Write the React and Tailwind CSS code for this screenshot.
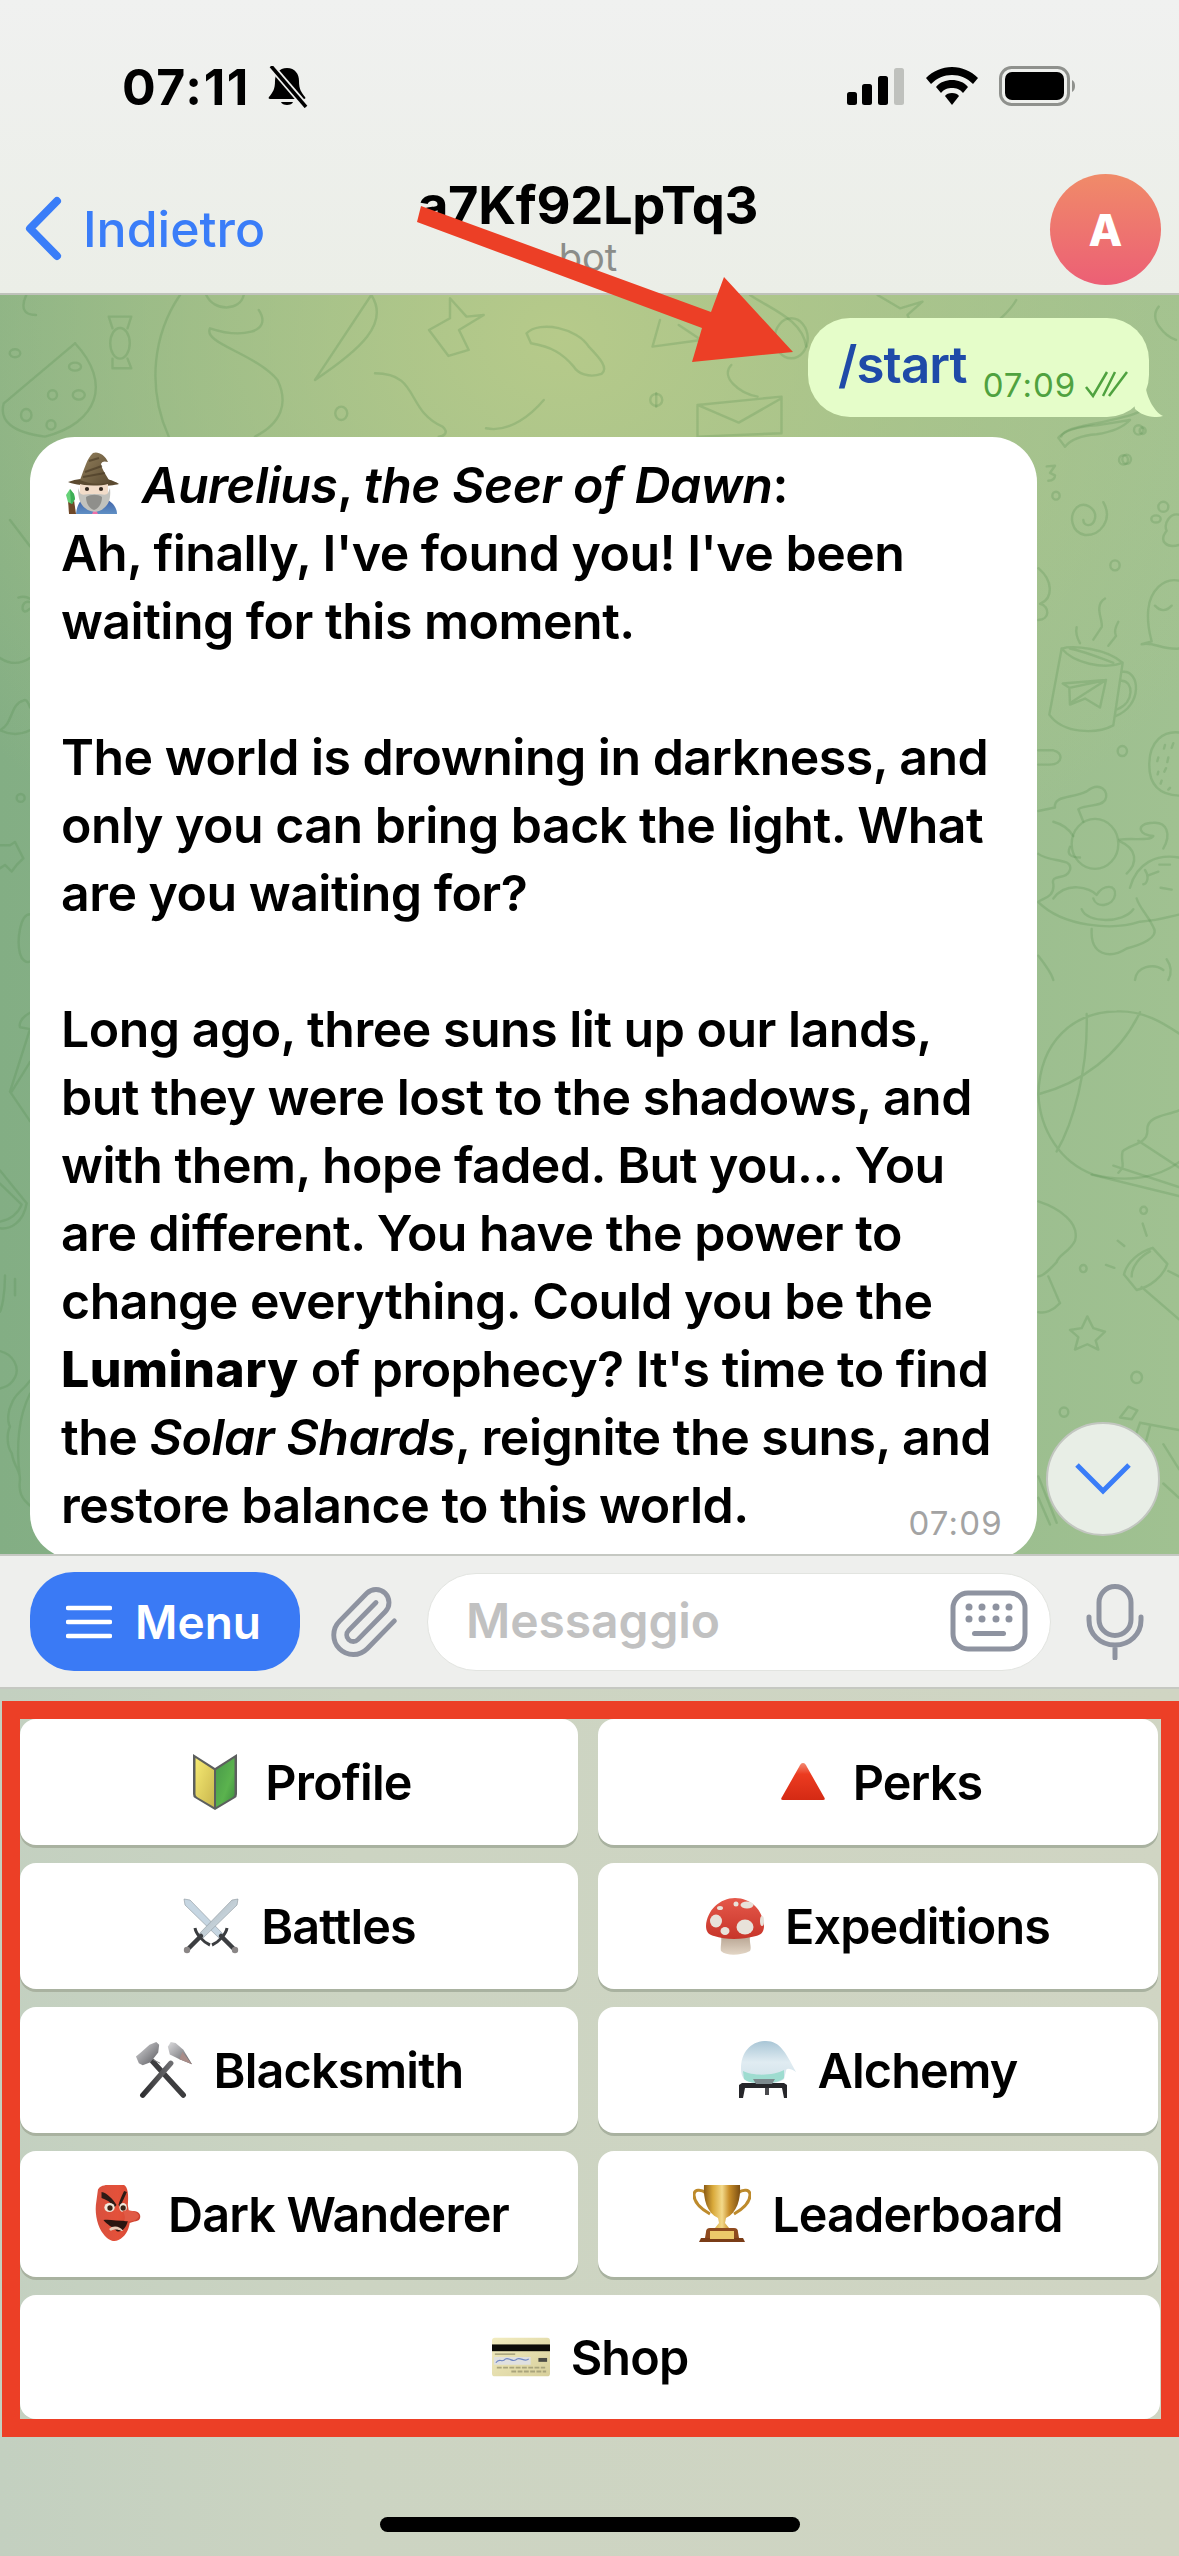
import React from "react";

const D = ({ t, children }) => (
  <g transform={t} fill="none" stroke="#4f8a4a" strokeOpacity="0.24" strokeWidth="2.4" strokeLinecap="round" strokeLinejoin="round">
    {children}
  </g>
);
const P = ({ d }) => <path d={d} vectorEffect="non-scaling-stroke" />;
const C = ({ x, y, r, ry }) => <ellipse cx={x} cy={y} rx={r} ry={ry || r} vectorEffect="non-scaling-stroke" />;

function Doodles() {
  return (
    <svg className="absolute inset-0 w-full h-full" viewBox="0 295 1179 1259" preserveAspectRatio="none">
      {/* top strip */}
      <D t="scale(0.75 0.3333)">
        <P d="M35 885C28 920 30 945 48 945" />
        <C x={160} y={1030} r={13} ry={46} />
        <P d="M150 985L145 950L175 950L170 985M150 1076L150 1105L175 1105L170 1076" />
        <P d="M100 1030L5 1210M100 1030C150 1150 130 1270 60 1310M5 1210Q-5 1290 60 1310" />
        <C x={100} y={1100} r={8} ry={12} /><C x={70} y={1185} r={6} ry={14} /><C x={105} y={1185} r={8} ry={14} /><C x={35} y={1245} r={7} ry={18} /><C x={68} y={1275} r={6} ry={14} />
        <C x={20} y={1060} r={7} ry={12} />
        <P d="M240 885C205 1000 195 1160 225 1310M345 930C365 1000 320 1015 280 985C270 1030 340 1060 370 1140C385 1210 375 1270 340 1310" />
        <P d="M275 885C285 935 320 935 325 885" />
        <P d="M495 885L420 1140C480 1050 520 970 495 885" />
        <P d="M600 895L622 950L645 945L612 990L625 1050L598 1068L572 990L600 955Z" />
        <P d="M702 1000C720 960 770 985 785 1040C800 1075 812 1105 802 1122C785 1135 770 1120 765 1100C750 1060 735 1040 708 1030Z" />
        <P d="M880 960L870 1040L935 1020L905 975M1000 885C1030 930 1070 960 1075 1040" />
        <C x={1055} y={1015} r={22} ry={60} />
        <P d="M500 1120C560 1120 540 1230 590 1280C600 1300 590 1310 585 1310M875 1180L875 1220" />
        <C x={455} y={1240} r={8} ry={20} />
        <C x={875} y={1200} r={8} ry={18} />
        <P d="M930 1215L1042 1190L1042 1300L930 1310ZM930 1215L985 1268L1042 1195" />
        <P d="M975 1095C960 1130 985 1180 1010 1190M648 1285C680 1300 710 1240 725 1200" />
        <P d="M1170 885L1200 925L1230 905L1210 945L1220 1000M1355 900C1340 960 1300 1010 1290 1040" />
        <P d="M1415 1310C1420 1280 1450 1280 1500 1250C1540 1230 1530 1190 1500 1210" />
        <C x={1518} y={1290} r={6} ry={14} />
        <C x={1498} y={1380} r={6} ry={14} />
        <P d="M1545 920C1530 960 1555 1010 1568 1020" />
      </D>
      {/* right column */}
      <D t="translate(1030 420) scale(0.3333 0.3571)">
        <P d="M85 50Q110 20 200 15L300 0M85 50L105 75Q130 45 200 40Q270 30 300 0" />
        <C x={338} y={30} r={9} /><C x={290} y={110} r={13} /><C x={78} y={212} r={11} /><C x={255} y={407} r={14} /><C x={277} y={927} r={14} />
        <P d="M50 130L75 128L60 148L75 155Q75 170 55 170" />
        <P d="M220 230C250 280 210 325 165 322C125 315 115 270 140 245C165 225 200 250 195 275C190 300 160 300 160 280" />
        <C x={400} y={243} r={15} ry={14} /><C x={378} y={277} r={14} ry={10} />
        <P d="M447 265C420 260 400 290 410 310C385 340 410 360 447 350" />
        <P d="M25 415C70 450 70 500 30 515C60 520 60 560 25 560" />
        <P d="M225 500C190 520 220 560 215 580L190 615M140 580Q135 600 150 625M265 565Q250 590 258 605L235 632" />
        <P d="M95 640L58 825C100 880 200 880 250 855L278 680C230 640 130 630 95 640ZM95 640C130 680 220 700 278 680M120 640C170 650 220 670 250 680M278 705C330 700 340 800 255 830M275 730C310 730 315 790 262 810" />
        <P d="M98 738L228 728L210 805L165 780L120 797L118 750ZM118 750L228 728L125 790" />
        <P d="M447 450C400 440 360 480 355 530C350 570 360 600 365 620L335 628C370 620 400 645 447 640M375 520Q400 545 425 520" />
        <P d="M447 875C400 870 360 900 358 960C355 1030 400 1050 447 1052M405 910L402 920M430 905L425 918M385 945L382 955M415 945L412 958M408 975L403 985M385 985L383 992M395 1010L392 1018M420 1030L415 1035" />
        <P d="M25 925L70 925C100 930 100 965 60 965L25 965" />
        <P d="M25 1095L75 1085C70 1050 130 1060 170 1040C210 1010 240 1040 225 1065C210 1085 170 1075 145 1090L160 1125" />
        <C x={195} y={1187} r={70} />
        <P d="M70 1125Q110 1135 130 1165M120 1195Q105 1225 150 1225M268 1175C310 1170 360 1180 370 1165C330 1165 310 1130 370 1128C410 1125 425 1160 400 1200" />
        <P d="M25 1215C60 1240 130 1225 120 1260C110 1290 60 1270 70 1300C75 1340 30 1340 25 1350M25 1350C100 1420 250 1430 330 1405C390 1400 420 1390 447 1385" />
        <P d="M300 1310C320 1240 380 1215 447 1225M388 1245L420 1245M392 1310L425 1315M345 1260C360 1280 350 1300 340 1300M355 1275L385 1265" />
        <P d="M270 1180C320 1200 325 1240 290 1270M70 1340C110 1290 180 1310 200 1330C220 1300 260 1300 255 1330C250 1360 200 1370 190 1340M155 1370C170 1410 280 1410 310 1370M185 1425C180 1500 240 1510 290 1480C330 1470 390 1450 370 1420C350 1380 330 1370 320 1340" />
        <P d="M25 1500C50 1530 65 1550 70 1568M315 1568C320 1530 370 1520 400 1540M410 1510C425 1530 425 1550 415 1568" />
      </D>
      <D t="translate(1030 980) scale(0.3333 0.3571)">
        <P d="M25 320C30 170 130 90 260 88C340 85 400 120 447 150M25 320C150 290 270 210 330 90M170 95C175 250 130 400 80 480M25 320C30 420 90 510 190 545C300 570 390 550 447 510" />
        <P d="M447 365C410 380 350 380 352 420C355 460 300 460 278 480C270 510 290 520 265 540M325 450L447 525M250 520L447 580M185 545L447 605" />
        <P d="M25 620C90 640 150 680 135 730C120 760 85 770 80 790C60 810 40 830 25 830M55 830L90 905C70 925 45 935 25 930" />
        <C x={341} y={645} r={10} /><C x={160} y={808} r={10} /><C x={320} y={1113} r={16} /><C x={102} y={1210} r={13} />
        <P d="M338 682L350 716M263 730L283 745M228 798L253 806" />
        <P d="M282 825C290 790 330 760 368 750L412 795C400 830 360 860 320 868ZM305 830C305 800 330 775 360 760M335 860L447 950M415 815L447 830" />
        <P d="M172 942L190 975L225 985L197 1010L205 1035L172 1020L135 1035L145 1000L120 980L155 975Z" />
        <P d="M270 1225L295 1195L322 1205L305 1230ZM330 1240L447 1260M330 1240L300 1320M360 1250L340 1320M400 1300L447 1370M400 1410L447 1450M25 1390L80 1520M25 1450L60 1525" />
      </D>
      {/* left column */}
      <D t="translate(0 520) scale(0.3333 0.657)">
        <P d="M30 0L90 40M55 118C75 115 90 120 90 120M90 135C60 150 60 120 90 125M0 210C30 220 60 220 90 210M0 320C40 310 30 280 70 275C80 270 90 285 90 285M0 320C40 330 70 325 90 320" />
        <C x={62} y={423} r={12} ry={6} />
        <P d="M0 495L30 495L45 490L70 515L50 525L35 535L15 525L0 530" />
        <P d="M90 600C60 600 50 640 60 660C65 670 80 675 90 672M90 750C70 755 55 765 60 772L90 775L30 870L90 915M35 870L90 825" />
        <P d="M0 990L80 1040C70 1070 30 1080 0 1078M0 1010L65 1042C50 1060 20 1066 0 1068M15 1150C15 1180 5 1200 0 1205M45 1155L45 1180" />
        <P d="M0 1265C40 1270 60 1290 45 1305C30 1320 10 1320 0 1322" />
        <P d="M90 1310C60 1330 45 1330 35 1345C25 1355 20 1370 30 1380C20 1390 20 1410 35 1420C40 1440 60 1445 60 1460C55 1480 65 1490 90 1500M90 1330C60 1360 45 1400 60 1460" />
      </D>
    </svg>
  );
}

/* ---------- emoji drawings ---------- */
const Wizard = ({ className }) => (
  <svg className={className} viewBox="0 0 54 63" width="54" height="63">
    <defs>
      <linearGradient id="wzh" x1="0" y1="0" x2="1" y2="1"><stop offset="0" stopColor="#93805c" /><stop offset="1" stopColor="#5c4c33" /></linearGradient>
      <linearGradient id="wzc" x1="0" y1="0" x2="0" y2="1"><stop offset="0" stopColor="#3f5fa6" /><stop offset="1" stopColor="#5f8fc4" /></linearGradient>
    </defs>
    <path d="M11 62C12 52 16 47 20 46L40 46C47 50 52 55 52 62Z" fill="url(#wzc)" />
    <path d="M30 56L33 62H27Z" fill="#ee6fa8" />
    <path d="M3 30C12 27 18 26 30 26C40 26 48 28 54 32C44 35 14 35 3 30Z" fill="#5b4a30" />
    <path d="M15 28C19 18 22 6 28 1C33-1 40 3 43 10C40 9 37 9 36 12C37 18 42 24 45 30C35 33 24 32 15 28Z" fill="url(#wzh)" />
    <path d="M20 20L37 14M18 25L40 21M24 9L34 6" stroke="#41331f" strokeWidth="2" fill="none" opacity=".55" />
    <path d="M15 32C22 34 36 34 43 32L43 43C40 47 18 47 15 43Z" fill="#f2dcc9" />
    <path d="M13 36C13 46 15 52 20 56C26 61 34 61 39 56C44 52 46 46 45 36L43 41C41 44 38 42 29 42C20 42 17 44 15 41Z" fill="#c2c2bd" />
    <path d="M21 45C26 42 33 42 37 45C37 52 33 57 29 58C25 57 21 52 21 45Z" fill="#8f8f8b" />
    <circle cx="22" cy="37" r="2.100" fill="#33281f" /><circle cx="36" cy="37" r="2.100" fill="#33281f" />
    <path d="M3 48L9 48L11 62H4Z" fill="#6f4828" />
    <path d="M5 37L1 43L3 50L7 52L10 47L9 42Z" fill="#66d278" />
    <path d="M5 37L6 52L7 52L10 47L9 42Z" fill="#3daf56" />
  </svg>
);

const Shield = () => (
  <svg viewBox="0 0 46 58" width="46" height="58">
    <defs>
      <linearGradient id="shy" x1="0" y1="0" x2="1" y2="1"><stop offset="0" stopColor="#f6ea72" /><stop offset="1" stopColor="#c9b64e" /></linearGradient>
      <linearGradient id="shg" x1="0" y1="0" x2="1" y2="1"><stop offset="0" stopColor="#48984a" /><stop offset=".6" stopColor="#5bb34e" /><stop offset="1" stopColor="#3d8d3e" /></linearGradient>
    </defs>
    <path d="M1 1L23 15L45 1L45 41Q45 44 43 45L23 57L3 45Q1 44 1 41Z" fill="#5c5f5e" />
    <path d="M3.5 5L22 17V54L5 44Q3.500 43 3.500 41Z" fill="url(#shy)" />
    <path d="M42.500 5L24 17V54L41 44Q42.500 43 42.500 41Z" fill="url(#shg)" />
  </svg>
);
const Triangle = () => (
  <svg viewBox="0 0 44 38" width="44" height="38">
    <defs><linearGradient id="tri" x1="0" y1="0" x2="0" y2="1"><stop offset="0" stopColor="#f28a72" /><stop offset=".3" stopColor="#ec3b20" /><stop offset="1" stopColor="#d42a14" /></linearGradient></defs>
    <path d="M22 0C20 0 19 2 18 4L1 34Q-1 37 2 37H42Q45 37 43 34L26 4C25 2 24 0 22 0Z" fill="url(#tri)" />
  </svg>
);
const Swords = () => (
  <svg viewBox="0 0 56 56" width="56" height="56">
    <defs><linearGradient id="swb" x1="0" y1="0" x2="1" y2="1"><stop offset="0" stopColor="#a9b1b5" /><stop offset="1" stopColor="#dbebf6" /></linearGradient></defs>
    <path d="M1 1L7 2L41 37L37 41L2 7Z" fill="#c6d6e2" stroke="#8b969c" strokeWidth=".6" />
    <path d="M55 1L49 2L15 37L19 41L54 7Z" fill="url(#swb)" stroke="#8b969c" strokeWidth=".6" />
    <path d="M12 30C13 36 20 44 27 47" fill="none" stroke="#3b3d40" strokeWidth="3" />
    <path d="M44 30C43 36 36 44 29 47" fill="none" stroke="#3b3d40" strokeWidth="3" />
    <path d="M18 38L6 50M38 38L50 50" stroke="#3c3e41" strokeWidth="4.500" strokeLinecap="round" />
    <circle cx="4" cy="52" r="3.200" fill="#8a8686" /><circle cx="52" cy="52" r="3.200" fill="#8a8686" />
  </svg>
);
const Hammers = () => (
  <svg viewBox="0 0 60 58" width="60" height="58">
    <defs>
      <linearGradient id="hmh" x1="0" y1="0" x2="1" y2="1"><stop offset="0" stopColor="#dcdcde" /><stop offset="1" stopColor="#55555a" /></linearGradient>
      <linearGradient id="hms" x1="0" y1="0" x2="1" y2="0"><stop offset="0" stopColor="#2f2f31" /><stop offset="1" stopColor="#6d6d70" /></linearGradient>
    </defs>
    <path d="M18 20L50 55" stroke="#3d3d3f" strokeWidth="5.500" strokeLinecap="round" />
    <path d="M37 22L8 55" stroke="url(#hms)" strokeWidth="5.500" strokeLinecap="round" />
    <path d="M18 18L26 22" stroke="#777" strokeWidth="1" />
    <path d="M1 15L6 11L15 3L22 0L25 3L24 11L16 21L8 24L4 22Z" fill="url(#hmh)" />
    <path d="M34 5L37 0L42 1L50 8L59 23L46 18L36 13Z" fill="url(#hmh)" />
    <path d="M59 23L49 10L46 18Z" fill="#a98c88" />
  </svg>
);
const Mushroom = () => (
  <svg viewBox="0 0 58 57" width="58" height="57">
    <defs>
      <linearGradient id="mus" x1="0" y1="0" x2="0" y2="1"><stop offset="0" stopColor="#e5584a" /><stop offset="1" stopColor="#c7352a" /></linearGradient>
      <linearGradient id="mst" x1="0" y1="0" x2="0" y2="1"><stop offset="0" stopColor="#b7a492" /><stop offset="1" stopColor="#e3d6c6" /></linearGradient>
    </defs>
    <path d="M15 38C16 44 14 50 15 53C20 58 34 58 44 53C46 50 43 44 44 38Z" fill="url(#mst)" />
    <path d="M0 28C1 12 14 0 29 0C45 0 57 12 58 28C58 34 55 37 50 38C35 42 20 42 8 38C3 37 0 34 0 28Z" fill="url(#mus)" />
    <g fill="#e8e2da">
      <ellipse cx="10" cy="23" rx="6" ry="6.500" /><ellipse cx="19" cy="33" rx="4.500" ry="4" /><ellipse cx="39" cy="29" rx="8.500" ry="7.500" />
      <ellipse cx="41" cy="7" rx="6.500" ry="3.500" /><ellipse cx="30" cy="6" rx="2.500" ry="2.500" /><ellipse cx="14" cy="10" rx="3" ry="2" /><ellipse cx="56" cy="23" rx="2" ry="5" />
    </g>
  </svg>
);
const Alembic = () => (
  <svg viewBox="0 0 58 58" width="58" height="58">
    <defs>
      <linearGradient id="alg" x1="0" y1="0" x2="0" y2="1"><stop offset="0" stopColor="#a9c6d6" /><stop offset=".5" stopColor="#e0ecf2" /><stop offset="1" stopColor="#cfe0e8" /></linearGradient>
    </defs>
    <path d="M3 28C3 10 14 0 28 0C42 0 48 12 58 31C52 27 48 27 48 30L46 38C40 44 12 44 6 38C4 35 3 32 3 28Z" fill="url(#alg)" />
    <path d="M5 30C14 35 36 35 46 29L46 37C40 44 12 44 6 38Z" fill="#9edcd0" />
    <path d="M4 42H46L49 44V57H46L44 47H7L5 57H1L1 44Z" fill="#26262a" />
    <path d="M15 38H37L34 43H18Z" fill="#7d8a8e" />
    <path d="M27 47H31V54H27Z" fill="#4a4a4e" />
  </svg>
);
const Tengu = () => (
  <svg viewBox="0 0 50 58" width="47" height="58" preserveAspectRatio="none">
    <defs><linearGradient id="ten" x1="0" y1="0" x2="1" y2="0"><stop offset="0" stopColor="#d8503e" /><stop offset=".5" stopColor="#e4513a" /><stop offset="1" stopColor="#c9402e" /></linearGradient></defs>
    <path d="M4 6C4 2 10 0 14 0H32C36 2 37 10 36 20L37 26H42C48 26 50 30 49 33C48 37 42 36 38 38C37 45 33 52 26 55C20 58 14 54 10 49C4 42 1 30 2 20Z" fill="url(#ten)" />
    <path d="M8 7C14 8 20 14 24 20L22 22C18 17 12 14 8 13ZM35 7C33 12 30 16 28 22L26 20C28 14 30 10 32 6Z" fill="#2d1a15" />
    <ellipse cx="16.500" cy="22.500" rx="5.500" ry="4.500" fill="#f1e9dc" /><ellipse cx="31" cy="22.500" rx="4" ry="4.500" fill="#f1e9dc" />
    <circle cx="17" cy="23" r="2.800" fill="#3a2417" /><circle cx="31" cy="23" r="2.800" fill="#3a2417" />
    <path d="M10 35C16 34 24 36 36 36C34 44 28 48 24 46C20 42 14 40 10 35Z" fill="#2a1510" />
    <path d="M16 44C20 40 28 41 31 46L29 46C26 44 20 44 18 46Z" fill="#e8cbb8" />
    <path d="M30 26C36 24 46 26 48 31C46 36 38 37 32 36C34 32 32 28 30 26Z" fill="#e15a45" />
  </svg>
);
const Trophy = () => (
  <svg viewBox="0 0 58 58" width="58" height="58">
    <defs>
      <linearGradient id="trg" x1="0" y1="0" x2="1" y2="0"><stop offset="0" stopColor="#8a5a14" /><stop offset=".25" stopColor="#d9a93a" /><stop offset=".5" stopColor="#f3d98a" /><stop offset=".7" stopColor="#c98f2a" /><stop offset="1" stopColor="#7b4e12" /></linearGradient>
    </defs>
    <path d="M13 8C8 4 1 4 1 10C1 18 10 25 17 29M45 8C50 4 57 4 57 10C57 18 48 25 41 29" fill="none" stroke="#bd8a2c" strokeWidth="3" />
    <path d="M11 0H47C48 14 44 28 33 33L32 38L36 43H22L26 38L25 33C14 28 10 14 11 0Z" fill="url(#trg)" />
    <path d="M13 47Q13 43 17 43H41Q45 43 45 47L46 53H12Z" fill="#8e4a1e" />
    <path d="M8 53H50L52 57H6Z" fill="#7a3c17" />
    <rect x="17" y="46" width="24" height="8" fill="#ecc96a" />
  </svg>
);
const Card = () => (
  <svg viewBox="0 0 60 40" width="60" height="40">
    <defs><linearGradient id="crd" x1="0" y1="0" x2="1" y2="1"><stop offset="0" stopColor="#f2ecc0" /><stop offset="1" stopColor="#d8d09c" /></linearGradient></defs>
    <rect x="0" y="0" width="60" height="40" rx="3" fill="url(#crd)" />
    <rect x="0" y="7" width="60" height="7" fill="#0d0c08" />
    <rect x="2" y="20" width="38" height="8" fill="#dfe0e0" />
    <path d="M4 26C8 20 10 27 14 22C18 20 22 27 26 22C30 20 34 26 38 22" fill="none" stroke="#6f86c2" strokeWidth="1.200" />
    <rect x="48" y="21" width="9" height="4" fill="#4a4a44" />
    <path d="M3 17H24" stroke="#7d7c5c" strokeWidth="1" />
    <path d="M5 31H55M20 35H56" stroke="#a9a47c" strokeWidth="2" strokeDasharray="5 1.500" />
  </svg>
);

/* ---------- keyboard button ---------- */
const Key = ({ icon, label, wide }) => (
  <div className={`flex items-center justify-center gap-[21px] rounded-[16px] bg-white shadow-[0_3px_0_#a9b2a0] ${wide ? "col-span-2 w-[1140px] h-[124px] shadow-none" : "h-[126px]"}`}>
    <div className="flex h-[58px] w-[58px] shrink-0 items-center justify-center">{icon}</div>
    <span className="pt-[2px] text-[48.500px] font-semibold tracking-[-0.85px] text-black">{label}</span>
  </div>
);

const Line = ({ children }) => <div className="h-[68px] whitespace-nowrap">{children}</div>;

export default function App() {
  return (
    <div className="relative flex h-[2556px] w-[1179px] flex-col overflow-hidden bg-[#ccd4c3] font-[Inter,sans-serif] text-black">
      {/* header */}
      <header className="flex h-[295px] shrink-0 flex-col border-b-2 border-[#bfc2bb] bg-[linear-gradient(180deg,#f0f1f0,#ebeee7)]">
        <div className="flex h-[174px] items-start justify-between pl-[122px] pr-[104px] pt-[65px]">
          <div className="flex items-center gap-[16px]">
            <span className="text-[50px] font-bold leading-[44px] tracking-[1.6px]">07:11</span>
            <svg width="42" height="42" viewBox="0 0 42 42">
              <path d="M21 2C13 2 9 8 9 15C9 23 7 26 3 31C2 32 3 33 4 33H38C39 33 40 32 39 31C35 26 33 23 33 15C33 8 29 2 21 2Z" />
              <path d="M15 36C16 40 26 40 27 36Z" />
              <path d="M5 0L41 42" stroke="#eff0ee" strokeWidth="7" />
              <path d="M5 0L40 41" stroke="#000" strokeWidth="3.500" />
            </svg>
          </div>
          <div className="flex items-start gap-[21px]">
            <svg width="58" height="38" viewBox="0 0 58 38" className="mt-[3px]">
              <rect x="0" y="24" width="10" height="13" rx="2.500" /><rect x="15" y="16" width="10" height="21" rx="2.500" /><rect x="31" y="8" width="10" height="29" rx="2.500" /><rect x="47" y="0" width="10" height="37" rx="2.500" fill="#bfc1bd" />
            </svg>
            <svg width="52" height="38" viewBox="0 0 52 38" className="mt-[2px]">
              <path d="M26 0C16 0 7 4 0 11L5 17C11 11 18 8 26 8C34 8 41 11 47 17L52 11C45 4 36 0 26 0Z" />
              <path d="M26 13C20 13 14 15 10 20L15 26C18 22 22 21 26 21C30 21 34 22 37 26L42 20C38 15 32 13 26 13Z" />
              <path d="M26 26C23 26 20 27 19 29L26 38L33 29C32 27 29 26 26 26Z" />
            </svg>
            <svg width="76" height="40" viewBox="0 0 76 40" className="mt-[1px]">
              <rect x="1.500" y="1.500" width="68" height="37" rx="11" fill="none" stroke="#8f918d" strokeWidth="3" />
              <rect x="6" y="6" width="59" height="28" rx="7" />
              <path d="M73 14C75 15 76 17 76 20C76 23 75 25 73 26Z" fill="#8f918d" />
            </svg>
          </div>
        </div>
        <div className="grid h-[111px] grid-cols-[1fr_auto_1fr] items-start px-[25px]">
          <div className="flex items-center gap-[21px] pt-[22px]">
            <svg width="37" height="65" viewBox="0 0 37 65" fill="none">
              <path d="M32 5L5 32.500L32 60" stroke="#3a7df8" strokeWidth="8" strokeLinecap="round" strokeLinejoin="round" />
            </svg>
            <span className="text-[50px] font-medium leading-[60px] tracking-[0px] text-[#3a7df8]">Indietro</span>
          </div>
          <div className="flex flex-col items-center pr-[3px] pt-[3px]">
            <span className="text-[52.500px] font-bold leading-[56px] tracking-[-0.3px]">a7Kf92LpTq3</span>
            <span className="mt-[2px] text-[38px] leading-[44px] text-[#8b8d89]">bot</span>
          </div>
          <div className="-mr-[7px] flex justify-end">
            <div className="flex h-[111px] w-[111px] items-center justify-center rounded-full bg-[linear-gradient(180deg,#f08b69,#ec5f75)] text-[44px] font-extrabold text-white">A</div>
          </div>
        </div>
      </header>

      {/* chat */}
      <main className="relative h-[1259px] shrink-0 overflow-hidden bg-[radial-gradient(ellipse_760px_620px_at_560px_40px,#b6ca8a,transparent),linear-gradient(90deg,#83ae84,#a0c191)]">
        <Doodles />
        <div className="relative flex flex-col pt-[23px]">
          <div className="relative mr-[30px] flex h-[99px] w-[341px] items-start self-end rounded-[42px] bg-[#e5fdc9] pl-[30px]">
            <span className="mt-[19px] text-[51px] font-semibold leading-[56px] tracking-[-0.9px] text-[#1f4aa8]">/start</span>
            <span className="ml-[16px] mt-[47px] text-[33px] leading-[40px] tracking-[1px] text-[#4fa23f]">07:09</span>
            <svg width="44" height="30" viewBox="0 0 44 30" className="ml-[9px] mt-[51px]" fill="none" stroke="#4fa23f" strokeWidth="2.500">
              <path d="M1 18L8 27L22 3M18 27L30 3M24 27L42 3" />
            </svg>
            <svg width="32" height="34" viewBox="0 0 32 34" className="absolute -right-[14px] bottom-[0px]">
              <path d="M0 0C6 0 14 0 14 0C15 12 22 28 32 33C22 36 10 32 4 26Z" fill="#e5fdc9" />
            </svg>
          </div>
          <div className="relative ml-[30px] mt-[20px] w-[1007px] rounded-[45px] bg-white pb-[20px] pl-[31px] pt-[14px] text-[50px] font-semibold leading-[68px] tracking-[-0.5px]">
            <Line>
              <Wizard className="ml-[4px] mr-[23px] inline-block align-[-12px]" />
              <em>Aurelius</em>, <em>the Seer of Dawn</em>:
            </Line>
            <Line>Ah, finally, I've found you! I've been</Line>
            <Line>waiting for this moment.</Line>
            <Line />
            <Line>The world is drowning in darkness, and</Line>
            <Line>only you can bring back the light. What</Line>
            <Line>are you waiting for?</Line>
            <Line />
            <Line>Long ago, three suns lit up our lands,</Line>
            <Line>but they were lost to the shadows, and</Line>
            <Line>with them, hope faded. But you... You</Line>
            <Line>are different. You have the power to</Line>
            <Line>change everything. Could you be the</Line>
            <Line><b className="font-extrabold tracking-[0.4px]">Luminary</b> of prophecy? It's time to find</Line>
            <Line>the <em>Solar Shards</em>, reignite the suns, and</Line>
            <Line>restore balance to this world.</Line>
            <span className="absolute bottom-[20px] right-[34px] text-[33px] font-normal leading-[32px] tracking-[1.2px] text-[#a3a3a3]">07:09</span>
          </div>
        </div>
        <div className="absolute bottom-[18px] right-[19px] flex h-[114px] w-[114px] items-center justify-center rounded-full border-2 border-[#c2c6c0] bg-[#e8eee6]">
          <svg width="58" height="34" viewBox="0 0 58 34" fill="none">
            <path d="M3 3L29 29L55 3" stroke="#3a7df8" strokeWidth="5" />
          </svg>
        </div>
      </main>

      {/* input bar */}
      <div className="flex h-[135px] shrink-0 items-center border-y-2 border-[#c5c8c2] bg-[#eeefed] pl-[30px]">
        <div className="flex h-[99px] w-[270px] items-center rounded-[44px] bg-[#3a7af5] pl-[36px] text-white">
          <svg width="46" height="36" viewBox="0 0 46 36" stroke="#fff" strokeWidth="4.500" strokeLinecap="round">
            <path d="M2 4H44M2 18H44M2 32H44" />
          </svg>
          <span className="ml-[23px] text-[46px] font-semibold leading-[50px]">Menu</span>
        </div>
        <svg width="78" height="78" viewBox="0 0 24 24" fill="none" stroke="#8e93a0" strokeWidth="1.500" strokeLinecap="round" strokeLinejoin="round" className="ml-[24px]">
          <path d="m16 6-8.414 8.586a2 2 0 0 0 2.829 2.829l8.414-8.586a4 4 0 1 0-5.657-5.657l-8.379 8.551a6 6 0 1 0 8.485 8.485l8.379-8.551" />
        </svg>
        <div className="ml-[25px] flex h-[98px] w-[624px] items-center justify-between rounded-full border border-[#e2e4e0] bg-white pb-[2px] pl-[38px] pr-[22px]">
          <span className="text-[48px] font-semibold leading-[56px] tracking-[-0.1px] text-[#c1c1c1]">Messaggio</span>
          <svg width="78" height="62" viewBox="0 0 78 62">
            <rect x="3" y="3" width="72" height="56" rx="15" fill="none" stroke="#8e93a0" strokeWidth="5" />
            <g fill="#8e93a0">
              <circle cx="19" cy="17" r="3.500" /><circle cx="32" cy="17" r="3.500" /><circle cx="46" cy="17" r="3.500" /><circle cx="59" cy="17" r="3.500" />
              <circle cx="19" cy="29" r="3.500" /><circle cx="32" cy="29" r="3.500" /><circle cx="46" cy="29" r="3.500" /><circle cx="59" cy="29" r="3.500" />
              <rect x="22" y="41" width="34" height="5" rx="2.500" />
            </g>
          </svg>
        </div>
        <svg width="58" height="76" viewBox="0 0 58 76" fill="none" stroke="#8e93a0" strokeWidth="5" strokeLinecap="round" className="ml-[35px]">
          <rect x="13" y="2.500" width="32" height="49" rx="16" />
          <path d="M3 33V36C3 50 14 61 29 61C44 61 55 50 55 36V33M29 61V74" />
        </svg>
      </div>

      {/* keyboard */}
      <section className="flex flex-1 flex-col bg-[linear-gradient(90deg,#c3d0c0,#ccd4c2_30%,#d0d5c3)] pt-[12px]">
        <div className="ml-[2px] border-[18px] border-[#ec3f26]">
          <div className="grid grid-cols-[558px_560px] gap-x-[20px] gap-y-[18px]">
            <Key icon={<Shield />} label="Profile" />
            <Key icon={<Triangle />} label="Perks" />
            <Key icon={<Swords />} label="Battles" />
            <Key icon={<Mushroom />} label="Expeditions" />
            <Key icon={<Hammers />} label="Blacksmith" />
            <Key icon={<Alembic />} label="Alchemy" />
            <Key icon={<Tengu />} label="Dark Wanderer" />
            <Key icon={<Trophy />} label="Leaderboard" />
            <Key icon={<Card />} label="Shop" wide />
          </div>
        </div>
        <div className="mx-auto mt-[80px] h-[15px] w-[420px] rounded-full bg-black" />
      </section>

      {/* annotation arrow */}
      <svg className="absolute left-[410px] top-[200px]" width="390" height="170" viewBox="410 200 390 170">
        <path d="M421 206L711 312L724 277L793 352L692 362L702 328L417 222Z" fill="#ec3f26" />
      </svg>
    </div>
  );
}
